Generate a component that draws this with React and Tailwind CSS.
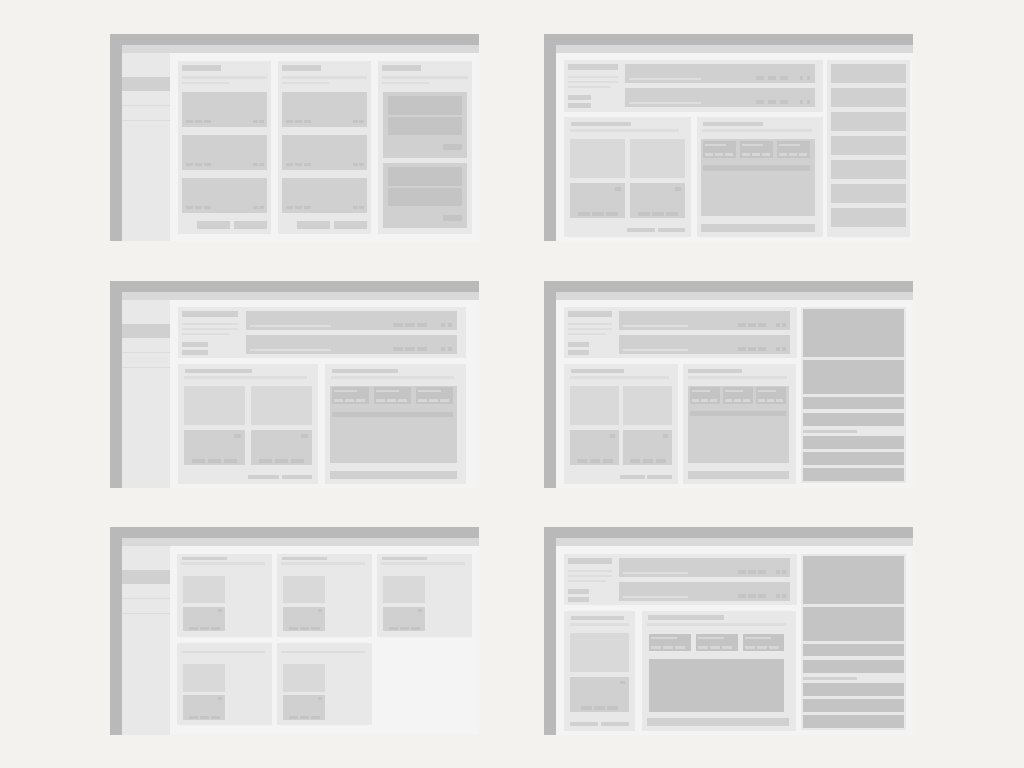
import React from 'react';

// Wireframe thumbnails: six layout variants on a 2x3 grid

const Pills = ({ n = 3, w, h = 'h-[3px]', gap, color = 'bg-[#c4c4c4]' }) => (
  <div className={`flex ${gap}`}>
    {Array.from({ length: n }).map((_, i) => (
      <div key={i} className={`${w} ${h} ${color}`} />
    ))}
  </div>
);

const Sidebar = () => (
  <div className="w-[48px] shrink-0 bg-[#e8e8e8] pt-[24px] flex flex-col">
    <div className="h-[14px] bg-[#d0d0d0]" />
    <div className="h-[15px] border-b border-[#dcdcdc]" />
    <div className="h-[15px] border-b border-[#dcdcdc]" />
  </div>
);

const Frame = ({ sidebar = false, children }) => (
  <div className="w-[369px] h-full flex flex-col bg-[#b9b9b9]">
    <div className="h-[11px] shrink-0" />
    <div className="flex-1 flex min-h-0">
      <div className="w-[12px] shrink-0" />
      <div className="flex-1 flex flex-col min-w-0">
        <div className="h-[8px] shrink-0 bg-[#d9d9d9]" />
        <div className="flex-1 flex min-h-0 bg-[#f4f4f4]">
          {sidebar && <Sidebar />}
          {children}
        </div>
      </div>
    </div>
  </div>
);

/* ---------- frame 1: board ---------- */

const TaskCard = () => (
  <div className="h-[35px] bg-[#d0d0d0] flex items-end justify-between pl-[4px] pr-[3px] pb-[4px]">
    <Pills w="w-[7px]" gap="gap-[2px]" />
    <Pills n={2} w="w-[5px]" gap="gap-[1px]" />
  </div>
);

const ColHead = () => (
  <>
    <div className="w-[39px] h-[6px] bg-[#d0d0d0]" />
    <div className="mt-[5px] h-[3px] bg-[#dedede]" />
    <div className="mt-[3px] w-[47px] h-[2px] bg-[#dedede]" />
  </>
);

const KanbanCol = () => (
  <div className="w-[93px] bg-[#e8e8e8] px-[4px] pt-[4px] flex flex-col">
    <ColHead />
    <div className="mt-[8px] flex flex-col gap-[8px]">
      <TaskCard />
      <TaskCard />
      <TaskCard />
    </div>
    <div className="mt-[8px] flex justify-end gap-[4px]">
      <div className="w-[33px] h-[8px] bg-[#d0d0d0]" />
      <div className="w-[33px] h-[8px] bg-[#d0d0d0]" />
    </div>
  </div>
);

const DetailCard = ({ h }) => (
  <div className={`${h} bg-[#d0d0d0] px-[5px] pt-[4px] flex flex-col`}>
    <div className="h-[19px] bg-[#c4c4c4]" />
    <div className="mt-[2px] h-[18px] bg-[#c4c4c4]" />
    <div className="mt-[9px] self-end w-[19px] h-[6px] bg-[#c4c4c4]" />
  </div>
);

const Frame1 = () => (
  <Frame sidebar>
    <div className="flex-1 flex gap-[7px] pl-[8px] pt-[8px] pr-[7px] pb-[7px]">
      <KanbanCol />
      <KanbanCol />
      <div className="w-[94px] bg-[#e8e8e8] px-[4px] pt-[4px] flex flex-col">
        <ColHead />
        <div className="mt-[8px] mx-[1px] flex flex-col gap-[5px]">
          <DetailCard h="h-[66px]" />
          <DetailCard h="h-[65px]" />
        </div>
      </div>
    </div>
  </Frame>
);

/* ---------- shared panels ---------- */

const WideCard = ({ line, pill, pg, gg, sp, sg, cpr }) => (
  <div className={`h-[19px] bg-[#d0d0d0] flex items-end justify-between pl-[4px] pb-[3px] ${cpr}`}>
    <div className={`${line} h-[2px] bg-[#dedede]`} />
    <div className={`flex ${gg}`}>
      <Pills w={pill} h="h-[4px]" gap={pg} />
      <Pills n={2} w={sp} h="h-[4px]" gap={sg} />
    </div>
  </div>
);

const TopPanel = ({ w, h, left, l3, sm, gap, pr, card }) => (
  <div className={`${w} ${h} shrink-0 bg-[#e8e8e8] flex pl-[4px] pt-[4px] ${pr} ${gap}`}>
    <div className={`${left} shrink-0 flex flex-col`}>
      <div className="h-[6px] bg-[#d0d0d0]" />
      <div className="mt-[6px] h-[2px] bg-[#dedede]" />
      <div className="mt-[3px] h-[2px] bg-[#dedede]" />
      <div className={`mt-[3px] ${l3} h-[2px] bg-[#dedede]`} />
      <div className={`mt-[7px] ${sm} h-[5px] bg-[#d0d0d0]`} />
      <div className={`mt-[3px] ${sm} h-[5px] bg-[#d0d0d0]`} />
    </div>
    <div className="flex-1 flex flex-col gap-[5px]">
      <WideCard {...card} />
      <WideCard {...card} />
    </div>
  </div>
);

const DarkTile = ({ h, badge, bh = 'h-[4px]', pill, pg, ph = 'h-[4px]' }) => (
  <div className={`${h} bg-[#d0d0d0] flex flex-col`}>
    <div className="flex justify-end pt-[4px] pr-[4px]">
      <div className={`${badge} ${bh} bg-[#c4c4c4]`} />
    </div>
    <div className="mt-auto flex justify-center pb-[2px]">
      <Pills w={pill} h={ph} gap={pg} />
    </div>
  </div>
);

const GridPanel = ({ w, tw, lw, tg, single, badge, bh, pill, pg, b1, b2, bgap }) => (
  <div className={`${w} h-[120px] shrink-0 bg-[#e8e8e8] px-[6px] pt-[5px] flex flex-col`}>
    <div className={`ml-[1px] ${tw} h-[4px] bg-[#d0d0d0]`} />
    <div className={`mt-[3px] ${lw} h-[3px] bg-[#dedede]`} />
    {single ? (
      <div className="mt-[7px] flex flex-col gap-[5px]">
        <div className="h-[39px] bg-[#d9d9d9]" />
        <DarkTile h="h-[35px]" badge={badge} bh={bh} pill={pill} pg={pg} />
      </div>
    ) : (
      <div className={`mt-[7px] grid grid-cols-2 gap-y-[5px] ${tg}`}>
        <div className="h-[39px] bg-[#d9d9d9]" />
        <div className="h-[39px] bg-[#d9d9d9]" />
        <DarkTile h="h-[35px]" badge={badge} pill={pill} pg={pg} />
        <DarkTile h="h-[35px]" badge={badge} pill={pill} pg={pg} />
      </div>
    )}
    <div className={`mt-[10px] flex justify-end ${bgap}`}>
      <div className={`${b1} h-[4px] bg-[#d0d0d0]`} />
      <div className={`${b2} h-[4px] bg-[#d0d0d0]`} />
    </div>
  </div>
);

const MiniCard = ({ w, line, pill }) => (
  <div className={`${w} h-[17px] bg-[#c4c4c4] px-[2px] pt-[3px] pb-[2px] flex flex-col`}>
    <div className={`${line} h-[2px] bg-[#d6d6d6]`} />
    <div className="mt-auto">
      <Pills w={pill} gap="gap-[2px]" color="bg-[#d6d6d6]" />
    </div>
  </div>
);

const ChartPanel = ({ w, pl, tw, tml, lw, lml, bw, bml, bpt, mini, mg, bar }) => (
  <div className={`${w} h-[120px] shrink-0 bg-[#e8e8e8] pt-[5px] flex flex-col ${pl}`}>
    <div className={`${tw} ${tml} h-[4px] bg-[#d0d0d0]`} />
    <div className={`mt-[3px] ${lw} ${lml} h-[3px] bg-[#dedede]`} />
    <div className={`mt-[7px] ${bw} ${bml} h-[77px] bg-[#d0d0d0] px-[2px] ${bpt}`}>
      <div className="w-fit flex flex-col">
        <div className={`flex ${mg}`}>
          <MiniCard {...mini} />
          <MiniCard {...mini} />
          <MiniCard {...mini} />
        </div>
        <div className={`${bar} bg-[#c4c4c4]`} />
      </div>
    </div>
    <div className={`mt-[8px] ${bw} ${bml} h-[8px] bg-[#d0d0d0]`} />
  </div>
);

const RightList = () => (
  <div className="w-[105px] h-[176px] shrink-0 bg-[#e8e8e8] p-[2px] flex flex-col">
    <div className="h-[48px] bg-[#c4c4c4]" />
    <div className="mt-[3px] h-[34px] bg-[#c4c4c4]" />
    <div className="mt-[3px] h-[12px] bg-[#c4c4c4]" />
    <div className="mt-[4px] h-[13px] bg-[#c4c4c4]" />
    <div className="mt-[4px] w-[54px] h-[3px] bg-[#d0d0d0]" />
    <div className="mt-[3px] h-[13px] bg-[#c4c4c4]" />
    <div className="mt-[3px] h-[13px] bg-[#c4c4c4]" />
    <div className="mt-[3px] h-[13px] bg-[#c4c4c4]" />
  </div>
);

const narrowTop = {
  w: 'w-[233px]', h: 'h-[51px]', left: 'w-[44px]', l3: 'w-[38px]', sm: 'w-[21px]', gap: 'gap-[7px]', pr: 'pr-[7px]',
  card: { line: 'w-[65px]', pill: 'w-[8px]', pg: 'gap-[2px]', gg: 'gap-[10px]', sp: 'w-[4px]', sg: 'gap-[2px]', cpr: 'pr-[4px]' },
};

/* ---------- frame 2 ---------- */

const Frame2 = () => (
  <Frame>
    <div className="flex-1 flex items-start gap-[4px] pl-[8px] pt-[7px] pr-[3px]">
      <div className="w-[259px] flex flex-col gap-[5px]">
        <TopPanel
          w="w-[259px]" h="h-[52px]" left="w-[50px]" l3="w-[43px]" sm="w-[23px]" gap="gap-[7px]" pr="pr-[8px]"
          card={{ line: 'w-[72px]', pill: 'w-[8px]', pg: 'gap-[4px]', gg: 'gap-[12px]', sp: 'w-[3px]', sg: 'gap-[4px]', cpr: 'pr-[5px]' }}
        />
        <div className="flex gap-[6px]">
          <GridPanel
            w="w-[127px]" tw="w-[60px]" lw="w-[109px]" tg="gap-x-[5px]" badge="w-[6px]"
            pill="w-[12px]" pg="gap-[2px]" b1="w-[28px]" b2="w-[27px]" bgap="gap-[3px]"
          />
          <ChartPanel
            w="w-[126px]" pl="pl-[4px]" tw="w-[60px]" tml="ml-[2px]" lw="w-[110px]" lml="ml-[1px]"
            bw="w-[114px]" bml="ml-0" bpt="pt-[2px]" mg="gap-[4px]" bar="mt-[7px] h-[6px]"
            mini={{ w: 'w-[33px]', line: 'w-[21px]', pill: 'w-[8px]' }}
          />
        </div>
      </div>
      <div className="w-[83px] h-[177px] bg-[#e8e8e8] px-[4px] pt-[4px] flex flex-col gap-[5px]">
        {Array.from({ length: 7 }).map((_, i) => (
          <div key={i} className="h-[19px] bg-[#d0d0d0]" />
        ))}
      </div>
    </div>
  </Frame>
);

/* ---------- frame 3 ---------- */

const Frame3 = () => (
  <Frame sidebar>
    <div className="flex-1 flex flex-col gap-[6px] pl-[8px] pt-[7px]">
      <TopPanel
        w="w-[288px]" h="h-[51px]" left="w-[56px]" l3="w-[47px]" sm="w-[26px]" gap="gap-[8px]" pr="pr-[9px]"
        card={{ line: 'w-[81px]', pill: 'w-[10px]', pg: 'gap-[2px]', gg: 'gap-[14px]', sp: 'w-[4px]', sg: 'gap-[3px]', cpr: 'pr-[5px]' }}
      />
      <div className="flex gap-[7px]">
        <GridPanel
          w="w-[140px]" tw="w-[67px]" lw="w-[123px]" tg="gap-x-[6px]" badge="w-[7px]"
          pill="w-[13px]" pg="gap-[3px]" b1="w-[31px]" b2="w-[30px]" bgap="gap-[3px]"
        />
        <ChartPanel
          w="w-[141px]" pl="pl-[5px]" tw="w-[66px]" tml="ml-[2px]" lw="w-[123px]" lml="ml-[1px]"
          bw="w-[127px]" bml="ml-0" bpt="pt-[1px]" mg="gap-[5px]" bar="mt-[8px] h-[5px]"
          mini={{ w: 'w-[37px]', line: 'w-[23px]', pill: 'w-[9px]' }}
        />
      </div>
    </div>
  </Frame>
);

/* ---------- frame 4 ---------- */

const Frame4 = () => (
  <Frame>
    <div className="flex-1 flex items-start gap-[4px] pl-[8px] pt-[7px]">
      <div className="w-[233px] flex flex-col gap-[6px]">
        <TopPanel {...narrowTop} />
        <div className="flex gap-[5px]">
          <GridPanel
            w="w-[114px]" tw="w-[53px]" lw="w-[99px]" tg="gap-x-[4px]" badge="w-[5px]"
            pill="w-[10px]" pg="gap-[3px]" b1="w-[25px]" b2="w-[25px]" bgap="gap-[2px]"
          />
          <ChartPanel
            w="w-[113px]" pl="pl-[5px]" tw="w-[54px]" tml="ml-0" lw="w-[99px]" lml="ml-0"
            bw="w-[101px]" bml="ml-0" bpt="pt-[1px]" mg="gap-[3px]" bar="mt-[7px] h-[5px]"
            mini={{ w: 'w-[30px]', line: 'w-[18px]', pill: 'w-[7px]' }}
          />
        </div>
      </div>
      <RightList />
    </div>
  </Frame>
);

/* ---------- frame 5 ---------- */

const GalleryCard = ({ first }) => (
  <div className={`bg-[#e8e8e8] pl-[4px] flex flex-col ${first ? 'h-[83px] pt-[3px]' : 'h-[82px] pt-[8px]'}`}>
    {first && <div className="ml-[1px] w-[45px] h-[3px] bg-[#d0d0d0]" />}
    <div className={`w-[84px] bg-[#dedede] ${first ? 'mt-[2px] h-[3px]' : 'h-[2px]'}`} />
    <div className={`ml-[2px] w-[42px] mt-[11px] bg-[#d9d9d9] ${first ? 'h-[27px]' : 'h-[28px]'}`} />
    <div className={`ml-[2px] w-[42px] bg-[#d0d0d0] flex flex-col ${first ? 'mt-[4px] h-[24px]' : 'mt-[3px] h-[25px]'}`}>
      <div className="flex justify-end pt-[2px] pr-[3px]">
        <div className="w-[4px] h-[3px] bg-[#c4c4c4]" />
      </div>
      <div className="mt-auto flex justify-center pb-[1px]">
        <Pills w="w-[9px]" gap="gap-[2px]" />
      </div>
    </div>
  </div>
);

const Frame5 = () => (
  <Frame sidebar>
    <div className="flex-1 pl-[7px] pt-[8px]">
      <div className="grid grid-cols-[95px_95px_95px] gap-x-[5px] gap-y-[6px]">
        <GalleryCard first />
        <GalleryCard first />
        <GalleryCard first />
        <GalleryCard />
        <GalleryCard />
      </div>
    </div>
  </Frame>
);

/* ---------- frame 6 ---------- */

const Frame6 = () => (
  <Frame>
    <div className="flex-1 flex items-start gap-[4px] pl-[8px] pt-[8px]">
      <div className="w-[233px] flex flex-col gap-[6px]">
        <TopPanel {...narrowTop} />
        <div className="flex gap-[7px]">
          <GridPanel
            single w="w-[71px]" tw="w-[53px]" lw="w-[59px]" badge="w-[5px]" bh="h-[3px]"
            pill="w-[11px]" pg="gap-[2px]" b1="w-[28px]" b2="w-[28px]" bgap="gap-[3px]"
          />
          <div className="w-[154px] h-[120px] bg-[#e8e8e8] pl-[5px] pt-[4px] flex flex-col">
            <div className="ml-[1px] w-[76px] h-[5px] bg-[#d0d0d0]" />
            <div className="mt-[3px] w-[139px] h-[3px] bg-[#dedede]" />
            <div className="mt-[8px] ml-[2px] flex gap-[5px]">
              <MiniCard w="w-[42px]" line="w-[26px]" pill="w-[10px]" />
              <MiniCard w="w-[42px]" line="w-[26px]" pill="w-[10px]" />
              <MiniCard w="w-[41px]" line="w-[26px]" pill="w-[10px]" />
            </div>
            <div className="mt-[8px] ml-[2px] w-[135px] h-[53px] bg-[#c4c4c4]" />
            <div className="mt-[6px] w-[142px] h-[8px] bg-[#d0d0d0]" />
          </div>
        </div>
      </div>
      <RightList />
    </div>
  </Frame>
);

export default function App() {
  return (
    <div className="w-[1024px] h-[768px] overflow-hidden bg-[#f3f2ee] pl-[110px] pt-[34px]">
      <div className="flex gap-[65px] h-[207px]">
        <Frame1 />
        <Frame2 />
      </div>
      <div className="flex gap-[65px] h-[207px] mt-[40px]">
        <Frame3 />
        <Frame4 />
      </div>
      <div className="flex gap-[65px] h-[208px] mt-[39px]">
        <Frame5 />
        <Frame6 />
      </div>
    </div>
  );
}
